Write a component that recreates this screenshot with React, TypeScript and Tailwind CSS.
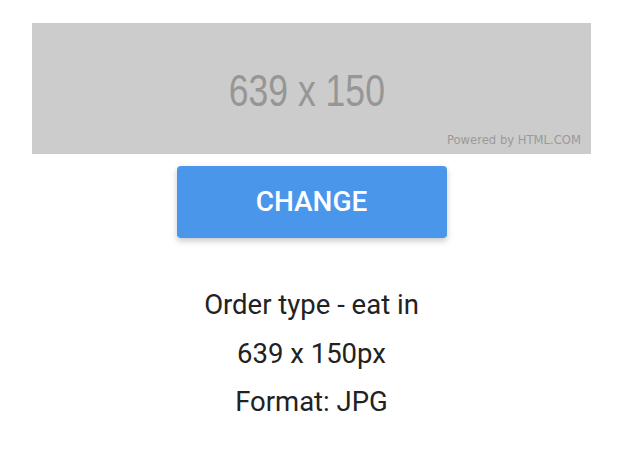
export default function App() {
  return (
    <div className="min-h-[450px] bg-white pl-[32px] pr-[29px] pt-[23px]" style={{ fontFamily: "Roboto, 'Liberation Sans', sans-serif" }}>
      {/* placeholder image */}
      <div className="relative flex h-[131px] w-full items-center justify-center bg-[#cccccc]">
        <span className="mr-[10px] mt-[4px] scale-x-[0.79] font-['Liberation_Sans',Arial,sans-serif] text-[45px] leading-none text-[#969696]">
          639 x 150
        </span>
        <span className="absolute bottom-[7px] right-[10px] font-['DejaVu_Sans',sans-serif] text-[11.6px] leading-none text-[#9a9a9a]">
          Powered by HTML.COM
        </span>
      </div>

      <div className="mt-[12px] flex justify-center">
        <button className="h-[72px] w-[270px] rounded-[4px] bg-[#4a96ea] text-[28px] font-medium text-white shadow-[0_3px_6px_rgba(0,0,0,0.22)]">
          CHANGE
        </button>
      </div>

      <div className="mt-[43px] flex flex-col items-center text-[27.5px] leading-[48.5px] text-[#222222]">
        <p>Order type - eat in</p>
        <p>639 x 150px</p>
        <p>Format: JPG</p>
      </div>
    </div>
  );
}
